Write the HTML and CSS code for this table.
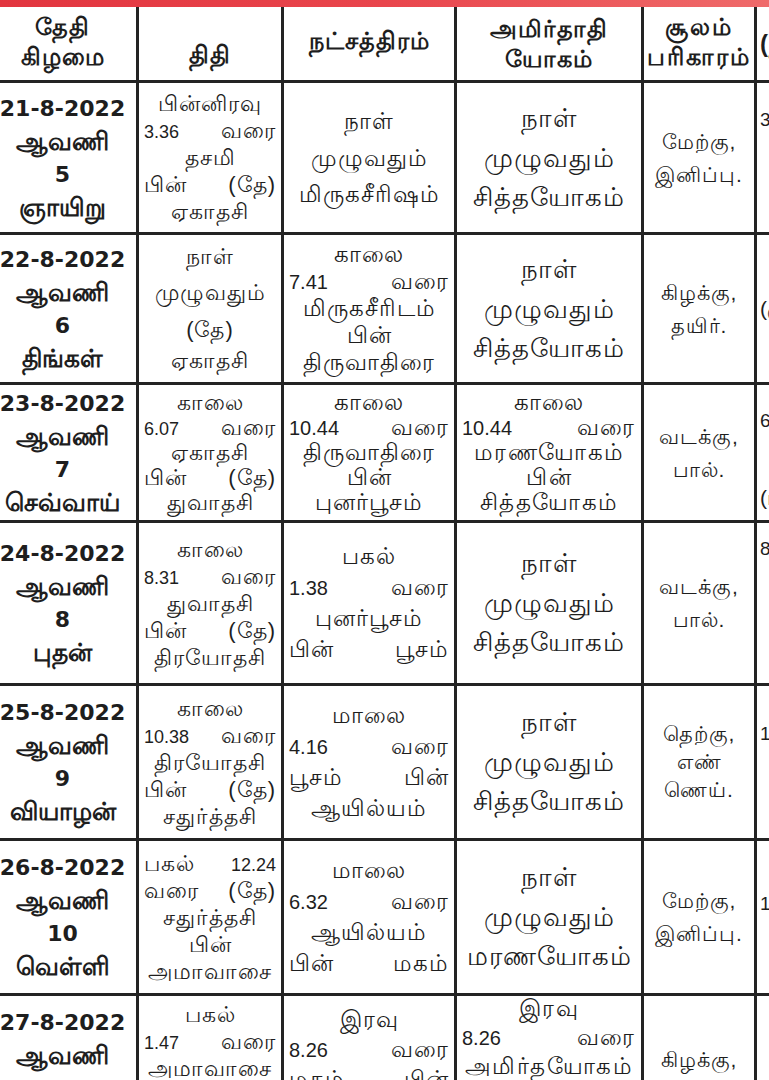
FILE: index.html
```html
<!DOCTYPE html>
<html lang="ta">
<head>
<meta charset="utf-8">
<title>ஆவணி நாள்காட்டி</title>
<link rel="stylesheet" href="styles.css">
</head>
<body>
<div class="strip"></div>
<div class="wrap">
<table class="cal">
<colgroup>
<col class="c1"><col class="c2"><col class="c3"><col class="c4"><col class="c5"><col class="c6">
</colgroup>
<thead>
<tr class="head">
<th class="h-date"><div>தேதி</div><div>கிழமை</div></th>
<th class="h-tithi"><div>திதி</div></th>
<th class="h-star"><div>நட்சத்திரம்</div></th>
<th class="h-yoga"><div>அமிர்தாதி</div><div>யோகம்</div></th>
<th class="h-sool"><div>சூலம்</div><div>பரிகாரம்</div></th>
<th class="h-last"><div>(நல்ல நேரம்)</div></th>
</tr>
</thead>
<tbody>
<tr class="r1">
<td class="date"><div class="num">21-8-2022</div><div>ஆவணி</div><div class="num">5</div><div>ஞாயிறு</div></td>
<td class="tithi"><div>பின்னிரவு</div><div class="sp"><span class="n">3.36</span> வரை</div><div>தசமி</div><div class="sp">பின் (தே)</div><div>ஏகாதசி</div></td>
<td class="star"><div>நாள்</div><div class="big">முழுவதும்</div><div>மிருகசீரிஷம்</div></td>
<td class="yoga"><div>நாள்</div><div class="big">முழுவதும்</div><div>சித்தயோகம்</div></td>
<td class="sool"><div>மேற்கு,</div><div>இனிப்பு.</div></td>
<td class="last"><div><span class="n">3.00-4.30</span></div></td>
</tr>
<tr class="r2">
<td class="date"><div class="num">22-8-2022</div><div>ஆவணி</div><div class="num">6</div><div>திங்கள்</div></td>
<td class="tithi t-mid"><div>நாள்</div><div class="big">முழுவதும்</div><div>(தே)</div><div>ஏகாதசி</div></td>
<td class="star s-five"><div>காலை</div><div class="sp"><span class="n">7.41</span> வரை</div><div>மிருகசீரிடம்</div><div>பின்</div><div>திருவாதிரை</div></td>
<td class="yoga"><div>நாள்</div><div class="big">முழுவதும்</div><div>சித்தயோகம்</div></td>
<td class="sool"><div>கிழக்கு,</div><div>தயிர்.</div></td>
<td class="last"><div>(முழுவதும்)</div></td>
</tr>
<tr class="r3">
<td class="date"><div class="num">23-8-2022</div><div>ஆவணி</div><div class="num">7</div><div>செவ்வாய்</div></td>
<td class="tithi"><div>காலை</div><div class="sp"><span class="n">6.07</span> வரை</div><div>ஏகாதசி</div><div class="sp">பின் (தே)</div><div>துவாதசி</div></td>
<td class="star s-five"><div>காலை</div><div class="sp"><span class="n">10.44</span> வரை</div><div>திருவாதிரை</div><div>பின்</div><div>புனர்பூசம்</div></td>
<td class="yoga small"><div>காலை</div><div class="sp"><span class="n">10.44</span> வரை</div><div>மரணயோகம்</div><div>பின்</div><div>சித்தயோகம்</div></td>
<td class="sool"><div>வடக்கு,</div><div>பால்.</div></td>
<td class="last"><div><span class="n">6.00-7.00</span></div><div>&nbsp;</div><div>&nbsp;</div><div>(மாலை)</div></td>
</tr>
<tr class="r4">
<td class="date"><div class="num">24-8-2022</div><div>ஆவணி</div><div class="num">8</div><div>புதன்</div></td>
<td class="tithi"><div>காலை</div><div class="sp"><span class="n">8.31</span> வரை</div><div>துவாதசி</div><div class="sp">பின் (தே)</div><div>திரயோதசி</div></td>
<td class="star"><div>பகல்</div><div class="sp"><span class="n">1.38</span> வரை</div><div>புனர்பூசம்</div><div class="sp">பின் பூசம்</div></td>
<td class="yoga"><div>நாள்</div><div class="big">முழுவதும்</div><div>சித்தயோகம்</div></td>
<td class="sool"><div>வடக்கு,</div><div>பால்.</div></td>
<td class="last"><div><span class="n">8.00-9.00</span></div></td>
</tr>
<tr class="r5">
<td class="date"><div class="num">25-8-2022</div><div>ஆவணி</div><div class="num">9</div><div>வியாழன்</div></td>
<td class="tithi"><div>காலை</div><div class="sp"><span class="n">10.38</span> வரை</div><div>திரயோதசி</div><div class="sp">பின் (தே)</div><div>சதுர்த்தசி</div></td>
<td class="star"><div>மாலை</div><div class="sp"><span class="n">4.16</span> வரை</div><div class="sp">பூசம் பின்</div><div>ஆயில்யம்</div></td>
<td class="yoga"><div>நாள்</div><div class="big">முழுவதும்</div><div>சித்தயோகம்</div></td>
<td class="sool"><div>தெற்கு,</div><div>எண்</div><div>ணெய்.</div></td>
<td class="last"><div><span class="n">10.30-11.30</span></div></td>
</tr>
<tr class="r6">
<td class="date"><div class="num">26-8-2022</div><div>ஆவணி</div><div class="num">10</div><div>வெள்ளி</div></td>
<td class="tithi"><div class="sp">பகல் <span class="n">12.24</span></div><div class="sp">வரை (தே)</div><div>சதுர்த்தசி</div><div>பின்</div><div>அமாவாசை</div></td>
<td class="star"><div>மாலை</div><div class="sp"><span class="n">6.32</span> வரை</div><div>ஆயில்யம்</div><div class="sp">பின் மகம்</div></td>
<td class="yoga"><div>நாள்</div><div class="big">முழுவதும்</div><div>மரணயோகம்</div></td>
<td class="sool"><div>மேற்கு,</div><div>இனிப்பு.</div></td>
<td class="last"><div><span class="n">12.00-1.00</span></div></td>
</tr>
<tr class="r7">
<td class="date"><div class="num">27-8-2022</div><div>ஆவணி</div><div class="num">11</div><div>சனி</div></td>
<td class="tithi"><div>பகல்</div><div class="sp"><span class="n">1.47</span> வரை</div><div>அமாவாசை</div><div class="sp">பின் (தே)</div><div>பிரதமை</div></td>
<td class="star"><div>இரவு</div><div class="sp"><span class="n">8.26</span> வரை</div><div class="sp">மகம் பின்</div><div>பூரம்</div></td>
<td class="yoga small"><div>இரவு</div><div class="sp"><span class="n">8.26</span> வரை</div><div>அமிர்தயோகம்</div><div>பின்</div><div>சித்தயோகம்</div></td>
<td class="sool"><div>கிழக்கு,</div><div>தயிர்.</div></td>
<td class="last"></td>
</tr>
</tbody>
</table>
</div>
</body>
</html>
```

FILE: styles.css
```css
html, body {
  margin: 0;
  padding: 0;
  background: #ffffff;
}
body {
  width: 769px;
  height: 1080px;
  overflow: hidden;
  font-family: "Liberation Sans", "Noto Sans", sans-serif;
  color: #1e1e1e;
}
.strip {
  height: 7px;
  background: linear-gradient(90deg, #e2353f 0%, #e9454c 50%, #ef6a6a 100%);
}
.wrap {
  width: 769px;
  overflow: hidden;
}
.cal {
  margin-left: -14px;
  border-collapse: collapse;
  table-layout: fixed;
  width: 935px;
}
.c1 { width: 150px; }
.c2 { width: 145px; }
.c3 { width: 173px; }
.c4 { width: 187px; }
.c5 { width: 113px; }
.c6 { width: 167px; }
.cal th, .cal td {
  --lh: 30px;
  border: 3px solid #232323;
  padding: 0 5px;
  text-align: center;
  vertical-align: middle;
  overflow: hidden;
}
.cal th > div, .cal td > div {
  height: var(--lh);
  line-height: var(--lh);
  white-space: nowrap;
}
.cal thead th {
  --lh: 30px;
  border-top: none;
  font-weight: bold;
  font-size: 24px;
  letter-spacing: 1px;
  height: 73px;
  padding: 0 3px;
}
.cal thead th.h-date > div:first-child { margin-top: -4px; }
.cal thead th.h-tithi { vertical-align: bottom; }
.cal thead th.h-tithi > div { margin-bottom: 10px; }
.cal thead th.h-star > div { margin-top: -6px; }
.cal thead th.h-sool { letter-spacing: 2px; }
.cal thead th.h-sool > div:first-child { margin-top: -4px; }
.cal thead th.h-last { text-align: left; padding-left: 3px; }
tr.r1 td { height: 149px; }
tr.r2 td { height: 147px; }
tr.r3 td { height: 135px; }
tr.r4 td { height: 160px; }
tr.r5 td { height: 152px; }
tr.r6 td { height: 152px; }
tr.r7 td { height: 152px; }
.n {
  font-family: "Liberation Sans", sans-serif;
  font-size: 18px;
  letter-spacing: 0;
}
.cal td.date {
  --lh: 33px;
  font-weight: bold;
  font-size: 25px;
}
.date .num {
  font-family: "DejaVu Sans", sans-serif;
  font-size: 22px;
}
.cal td.tithi {
  --lh: 27px;
  font-size: 22px;
  letter-spacing: 1px;
}
.cal td.tithi.t-mid { --lh: 31px; }
.cal tr.r3 td.tithi { --lh: 25px; }
.cal td.star {
  --lh: 31px;
  font-size: 23px;
  letter-spacing: 1px;
}
.star .n { font-size: 20px; }
.cal td.star.s-five { --lh: 27px; }
.cal tr.r3 td.star { --lh: 25px; }
.cal td > div.big { height: 42px; line-height: 42px; }
.cal td.yoga {
  --lh: 37px;
  font-size: 26px;
  letter-spacing: 1px;
}
.yoga .n { font-size: 20px; }
.cal td.yoga.small {
  --lh: 25px;
  font-size: 23px;
  letter-spacing: 1.5px;
}
.yoga.small .n { font-size: 20px; letter-spacing: 0; }
.cal td.sool {
  --lh: 33px;
  font-size: 21px;
  letter-spacing: 1px;
}
.cal tr.r5 td.sool { --lh: 28px; }
.cal tr.r7 td.tithi,
.cal tr.r7 td.star,
.cal tr.r7 td.yoga { vertical-align: top; }
.cal tr.r7 td.tithi > div:first-child { margin-top: 5px; }
.cal tr.r7 td.star { --lh: 30px; }
.cal tr.r7 td.star > div:first-child { margin-top: 8px; }
.cal tr.r7 td.yoga.small { --lh: 29px; }
.cal tr.r7 td.yoga > div:first-child { margin-top: -2px; }
.cal tr.r7 td.sool > div:first-child { margin-top: 8px; }
.cal td.last {
  --lh: 28px;
  font-size: 21px;
  text-align: left;
  padding-left: 3px;
  vertical-align: top;
}
.cal tr.r2 td.last { vertical-align: middle; }
.cal tr.r1 td.last > div:first-child { margin-top: 22px; }
.cal tr.r3 td.last { --lh: 26px; }
.cal tr.r3 td.last > div:first-child { margin-top: 22px; }
.cal tr.r4 td.last > div:first-child { margin-top: 11px; }
.cal tr.r5 td.last > div:first-child { margin-top: 33px; }
.cal tr.r6 td.last > div:first-child { margin-top: 48px; }
.last .n { font-size: 19px; }
.cal td > div.sp {
  white-space: normal;
  text-align: justify;
  text-align-last: justify;
}
```
